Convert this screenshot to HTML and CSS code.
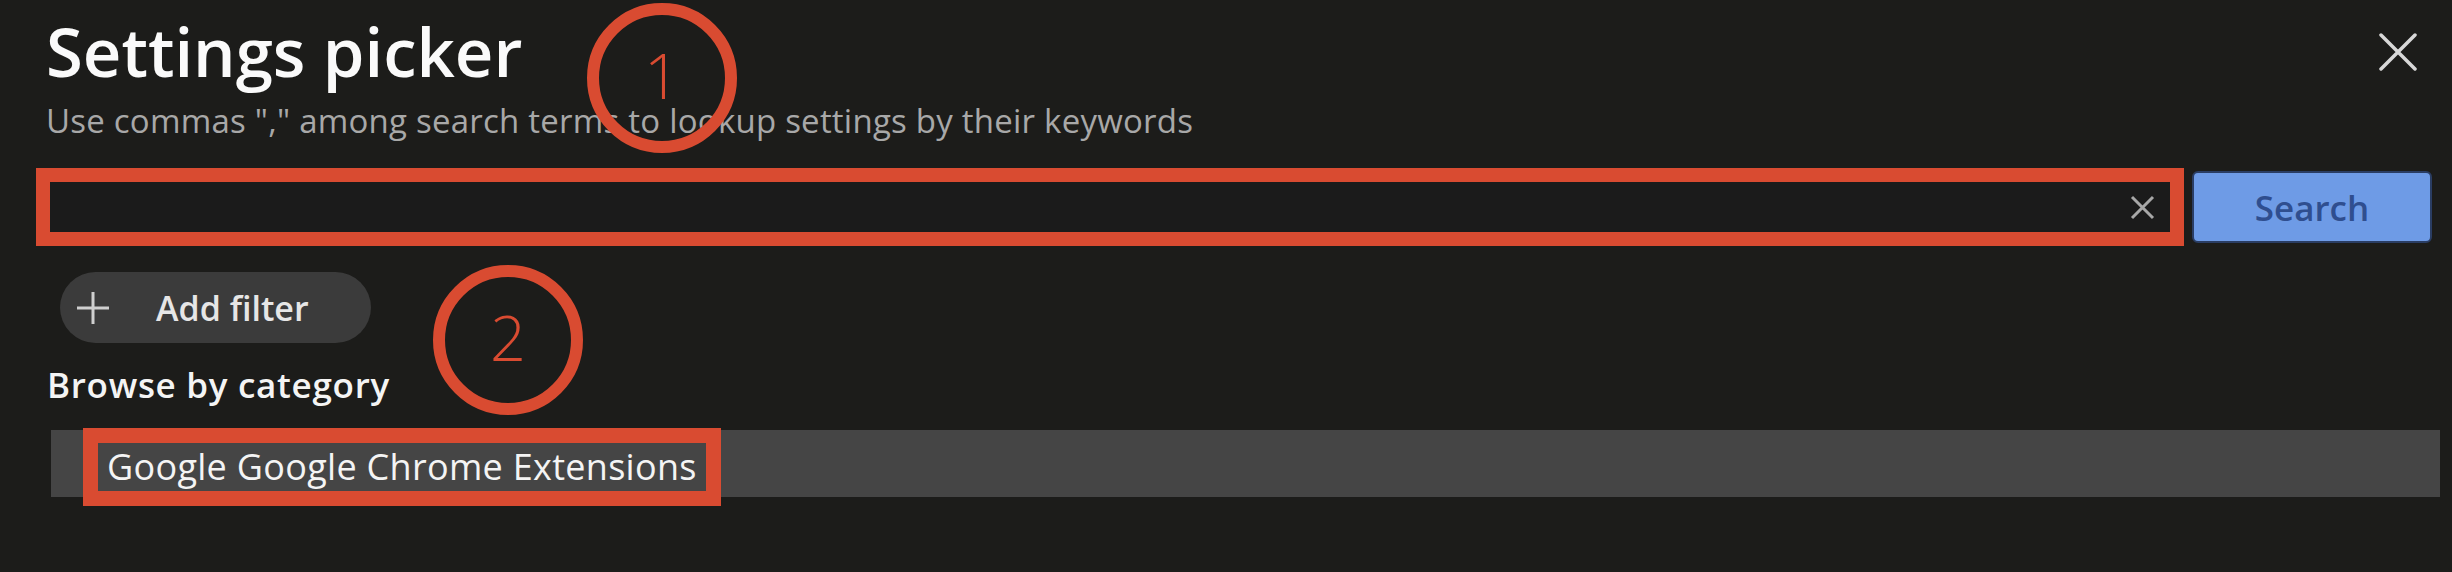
FILE: index.html
```html
<!DOCTYPE html>
<html lang="en">
<head>
<meta charset="utf-8">
<title>Settings picker</title>
<link rel="stylesheet" href="styles.css">
</head>
<body>
<div class="panel">
  <header class="header">
    <div class="heading">
      <h1 class="title">Settings picker</h1>
      <p class="subtitle">Use commas "," among search terms to lookup settings by their keywords</p>
    </div>
    <button class="close" aria-label="Close">
      <svg viewBox="0 0 38 38" width="38" height="38"><path d="M2 2 L36 36 M36 2 L2 36" stroke="currentColor" stroke-width="3.5" fill="none" stroke-linecap="round"/></svg>
    </button>
  </header>

  <div class="search-row">
    <div class="search-box">
      <input class="search-input" type="text" aria-label="Search settings">
      <button class="clear" aria-label="Clear">
        <svg viewBox="0 0 25 25" width="25" height="25"><path d="M2 2 L23 23 M23 2 L2 23" stroke="currentColor" stroke-width="3" fill="none"/></svg>
      </button>
    </div>
    <button class="search-btn">Search</button>
  </div>

  <button class="add-filter">
    <svg class="plus" viewBox="0 0 34 34" width="34" height="34"><path d="M17 1 V33 M1 17 H33" stroke="currentColor" stroke-width="3" fill="none"/></svg>
    <span class="add-filter-label">Add filter</span>
  </button>

  <h2 class="section-title">Browse by category</h2>

  <div class="category-row">
    <span class="category">Google Google Chrome Extensions</span>
  </div>

  <span class="marker marker-1">1</span>
  <span class="marker marker-2">2</span>
</div>
</body>
</html>
```

FILE: styles.css
```css
html, body {
  margin: 0;
  background: #1c1c1a;
}

body {
  font-family: "Open Sans", "Noto Sans", sans-serif;
  color: #f2f2f2;
}

.panel {
  position: relative;
  height: 572px;
  box-sizing: border-box;
  padding: 17px 12px 0 50px;
  overflow: hidden;
}

.header {
  display: flex;
  justify-content: space-between;
  align-items: flex-start;
  padding-right: 23px;
}

.heading {
  margin-left: -4px;
}

.title {
  margin: 0;
  font-size: 67px;
  line-height: 68px;
  font-weight: 600;
  color: #fafafa;
}

.subtitle {
  margin: 20px 0 0;
  font-size: 33px;
  line-height: 32px;
  letter-spacing: 0.23px;
  color: #a8a8a8;
}

.close {
  margin-top: 16px;
  width: 38px;
  height: 38px;
  padding: 0;
  border: 0;
  background: none;
  color: #d8d8d8;
}

.search-row {
  display: flex;
  align-items: center;
  gap: 8px;
  margin: 31px 8px 0 -14px;
}

.search-box {
  flex: 1;
  height: 78px;
  box-sizing: border-box;
  border: 14px solid #d94b31;
  background: #1b1b1b;
  display: flex;
  align-items: center;
}

.search-input {
  flex: 1;
  height: 100%;
  border: 0;
  background: transparent;
  outline: none;
}

.clear {
  width: 25px;
  height: 25px;
  padding: 0;
  margin-right: 15px;
  border: 0;
  background: none;
  color: #a8a8a8;
}

.search-btn {
  width: 240px;
  height: 72px;
  box-sizing: border-box;
  border: 2px solid #2a3d63;
  border-radius: 6px;
  background: #6e9be6;
  color: #2f4e8f;
  font-family: "Open Sans", sans-serif;
  font-size: 35px;
  font-weight: 600;
}

.add-filter {
  display: flex;
  align-items: center;
  gap: 46px;
  width: 311px;
  height: 71px;
  margin: 26px 0 0 10px;
  padding: 0 0 0 16px;
  border: 0;
  border-radius: 36px;
  background: #3b3b3b;
  color: #e6e6e6;
  font-family: "Open Sans", sans-serif;
  font-size: 34px;
  font-weight: 600;
}

.plus {
  color: #cfcfcf;
  flex: none;
}

.section-title {
  margin: 25px 0 0 -3px;
  font-size: 35px;
  line-height: 34px;
  letter-spacing: 0.7px;
  font-weight: 600;
  color: #f4f4f4;
}

.category-row {
  display: flex;
  align-items: center;
  height: 67px;
  margin: 28px 0 0 1px;
  padding-left: 32px;
  background: #454545;
}

.category {
  height: 78px;
  box-sizing: border-box;
  margin-top: 7px;
  padding: 0 9px;
  border: 15px solid #d94b31;
  font-size: 36px;
  line-height: 48px;
  letter-spacing: 0.3px;
  color: #f4f4f4;
}

.marker {
  position: absolute;
  width: 150px;
  height: 150px;
  box-sizing: border-box;
  padding-bottom: 8px;
  border: 12px solid #d94b31;
  border-radius: 50%;
  display: flex;
  align-items: center;
  justify-content: center;
  font-size: 63px;
  line-height: 1;
  font-weight: 300;
  color: #d94b31;
}

.marker-1 {
  left: 587px;
  top: 3px;
}

.marker-2 {
  left: 433px;
  top: 265px;
}
```
